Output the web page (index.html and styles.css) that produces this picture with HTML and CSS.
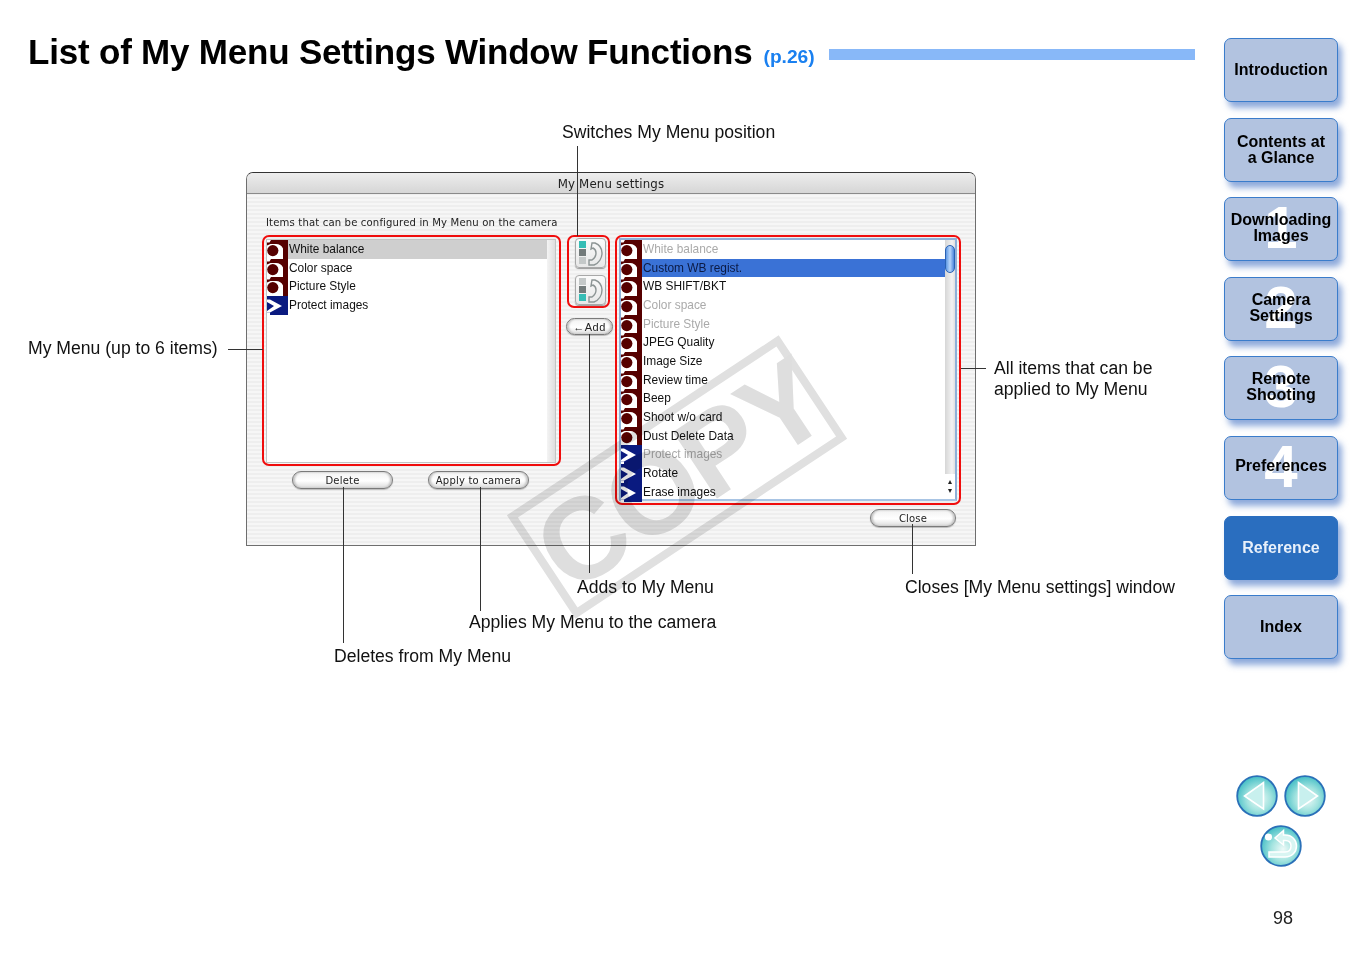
FILE: index.html
```html
<!DOCTYPE html>
<html lang="en">
<head>
<meta charset="utf-8">
<title>List of My Menu Settings Window Functions</title>
<link rel="stylesheet" href="styles.css">
</head>
<body>
<svg class="defs" width="0" height="0" aria-hidden="true">
  <symbol id="ic-cam" viewBox="0 0 21 19">
    <rect width="21" height="19" fill="#fff"/>
    <path d="M4 0H21V19H16V8.5Q14 4 9 4H3.5L0 5.5V2.5H2.5Z" fill="#560000"/>
    <circle cx="5.8" cy="10.6" r="5.6" fill="#560000"/>
  </symbol>
  <symbol id="ic-play" viewBox="0 0 21 19">
    <rect width="21" height="19" fill="#0a1a80"/>
    <path d="M0 3.5H3L15 10 3 16.5H0V15L7 10 0 6Z" fill="#fff"/>
    <path d="M0 16.5H3V19H0Z" fill="#fff"/>
  </symbol>
  <symbol id="ic-order" viewBox="0 0 26 28">
    <rect x="1" y="2" width="7" height="7" fill="#35bdb5"/>
    <rect x="1" y="10" width="7" height="7" fill="#727a7a"/>
    <rect x="1" y="18" width="7" height="7" fill="#c4c8c8"/>
    <path d="M14 4H17C22 6 24 10 24 14C24 19 21 24 16 26H11V21H14C17 19 18 17 18 14C18 12 17 10 15 9L13 10Z" fill="none" stroke="#8c9494" stroke-width="1.4"/>
  </symbol>
  <symbol id="ic-order2" viewBox="0 0 26 28">
    <rect x="1" y="2" width="7" height="7" fill="#c4c8c8"/>
    <rect x="1" y="10" width="7" height="7" fill="#727a7a"/>
    <rect x="1" y="18" width="7" height="7" fill="#35bdb5"/>
    <path d="M14 4H17C22 6 24 10 24 14C24 19 21 24 16 26H11V21H14C17 19 18 17 18 14C18 12 17 10 15 9L13 10Z" fill="none" stroke="#8c9494" stroke-width="1.4"/>
  </symbol>
  <radialGradient id="disc" cx="55%" cy="58%" r="60%">
    <stop offset="0" stop-color="#eefaf8"/>
    <stop offset=".5" stop-color="#a2e3df"/>
    <stop offset="1" stop-color="#3fbcc4"/>
  </radialGradient>
</svg>

<div class="page">
  <main class="content">
    <header class="heading">
      <h1 class="title">List of My Menu Settings Window Functions</h1>
      <a class="pageref">(p.26)</a>
      <span class="rule"></span>
    </header>

    <section class="diagram">
      <div class="dialog">
        <div class="titlebar">My Menu settings</div>
        <div class="dialog-body">
          <div class="caption">Items that can be configured in My Menu on the camera</div>
          <div class="panes">
            <div class="pane-left">
              <div class="redbox list-left">
                <div class="listbox">
                  <div class="rows">
                    <div class="row picked"><svg class="ic"><use href="#ic-cam"/></svg><span>White balance</span></div>
                    <div class="row"><svg class="ic"><use href="#ic-cam"/></svg><span>Color space</span></div>
                    <div class="row"><svg class="ic"><use href="#ic-cam"/></svg><span>Picture Style</span></div>
                    <div class="row"><svg class="ic"><use href="#ic-play"/></svg><span>Protect images</span></div>
                  </div>
                  <div class="track"></div>
                </div>
              </div>
              <div class="left-actions">
                <button class="pill wide">Delete</button>
                <button class="pill wide">Apply to camera</button>
              </div>
            </div>

            <div class="pane-mid">
              <div class="redbox order">
                <div class="orderbtn"><svg class="ic-o"><use href="#ic-order"/></svg></div>
                <div class="orderbtn"><svg class="ic-o"><use href="#ic-order2"/></svg></div>
              </div>
              <button class="pill add">←Add</button>
            </div>

            <div class="pane-right">
              <div class="redbox list-right">
                <div class="listbox focus">
                  <div class="rows">
                    <div class="row off"><svg class="ic"><use href="#ic-cam"/></svg><span>White balance</span></div>
                    <div class="row sel"><svg class="ic"><use href="#ic-cam"/></svg><span>Custom WB regist.</span></div>
                    <div class="row"><svg class="ic"><use href="#ic-cam"/></svg><span>WB SHIFT/BKT</span></div>
                    <div class="row off"><svg class="ic"><use href="#ic-cam"/></svg><span>Color space</span></div>
                    <div class="row off"><svg class="ic"><use href="#ic-cam"/></svg><span>Picture Style</span></div>
                    <div class="row"><svg class="ic"><use href="#ic-cam"/></svg><span>JPEG Quality</span></div>
                    <div class="row"><svg class="ic"><use href="#ic-cam"/></svg><span>Image Size</span></div>
                    <div class="row"><svg class="ic"><use href="#ic-cam"/></svg><span>Review time</span></div>
                    <div class="row"><svg class="ic"><use href="#ic-cam"/></svg><span>Beep</span></div>
                    <div class="row"><svg class="ic"><use href="#ic-cam"/></svg><span>Shoot w/o card</span></div>
                    <div class="row"><svg class="ic"><use href="#ic-cam"/></svg><span>Dust Delete Data</span></div>
                    <div class="row off"><svg class="ic"><use href="#ic-play"/></svg><span>Protect images</span></div>
                    <div class="row"><svg class="ic"><use href="#ic-play"/></svg><span>Rotate</span></div>
                    <div class="row"><svg class="ic"><use href="#ic-play"/></svg><span>Erase images</span></div>
                  </div>
                  <div class="track scroll">
                    <div class="thumb"></div>
                    <div class="arrows"><span class="up"></span><span class="down"></span></div>
                  </div>
                </div>
              </div>
              <button class="pill close">Close</button>
            </div>
          </div>
        </div>
      </div>

      <i class="line v l-switch"></i>
      <i class="line h l-mymenu"></i>
      <i class="line h l-all"></i>
      <i class="line v l-add"></i>
      <i class="line v l-close"></i>
      <i class="line v l-delete"></i>
      <i class="line v l-apply"></i>

      <p class="note n-switch">Switches My Menu position</p>
      <p class="note n-mymenu">My Menu (up to 6 items)</p>
      <p class="note n-all">All items that can be<br>applied to My Menu</p>
      <p class="note n-add">Adds to My Menu</p>
      <p class="note n-close">Closes [My Menu settings] window</p>
      <p class="note n-apply">Applies My Menu to the camera</p>
      <p class="note n-delete">Deletes from My Menu</p>

      <div class="stamp"><span>COPY</span></div>
    </section>
  </main>

  <aside class="side">
    <nav class="nav">
      <a class="tab">Introduction</a>
      <a class="tab">Contents at<br>a Glance</a>
      <a class="tab"><b class="num">1</b><span>Downloading<br>Images</span></a>
      <a class="tab"><b class="num">2</b><span>Camera<br>Settings</span></a>
      <a class="tab"><b class="num">3</b><span>Remote<br>Shooting</span></a>
      <a class="tab"><b class="num">4</b><span class="solo">Preferences</span></a>
      <a class="tab now">Reference</a>
      <a class="tab">Index</a>
    </nav>
    <div class="pager">
      <div class="pager-row">
        <svg class="disc" viewBox="0 0 42 42"><circle cx="21" cy="21" r="19.8" fill="url(#disc)" stroke="#2a70b8" stroke-width="1.8"/><path d="M27.5 7.5V34L8.5 21Z" fill="#c8f0ee" stroke="#fff" stroke-width="1.6"/></svg>
        <svg class="disc" viewBox="0 0 42 42"><circle cx="21" cy="21" r="19.8" fill="url(#disc)" stroke="#2a70b8" stroke-width="1.8"/><path d="M14.5 7.5V34L33.5 21Z" fill="#c8f0ee" stroke="#fff" stroke-width="1.6"/></svg>
      </div>
      <svg class="disc" viewBox="0 0 42 42"><circle cx="21" cy="21" r="19.8" fill="url(#disc)" stroke="#2a70b8" stroke-width="1.8"/><circle cx="8.5" cy="12" r="3.6" fill="#fff"/><path d="M23.5 5.5L15 13L23.5 20V15.5H25C29 15.5 31 18 31 21C31 24.5 29 27 25 27H9V32H25C32 32 36.5 27 36.5 21C36.5 15 32 10 25 10H23.5Z" fill="#d8f5f2" stroke="#fff" stroke-width="1.5"/></svg>
    </div>
    <div class="pagenum">98</div>
  </aside>
</div>
</body>
</html>
```
FILE: styles.css
```css
* { box-sizing: border-box; }
html, body { margin: 0; padding: 0; background: #fff; }
body { font-family: "Liberation Sans", Arial, sans-serif; color: #000; overflow: hidden; }
.defs { position: absolute; }
.page { display: flex; width: 1350px; height: 954px; }

/* main column */
.content { width: 1224px; flex: none; padding-left: 28px; }
.heading { display: flex; align-items: flex-start; height: 102px; padding-top: 31px; width: 1167px; }
.title { margin: 0; font-size: 35px; line-height: 42px; font-weight: 700; white-space: nowrap; letter-spacing: -.2px; }
.pageref { color: #1a80f0; font-size: 19.2px; font-weight: 700; line-height: 24px; margin: 14px 0 0 11px; white-space: nowrap; }
.rule { flex: 1; height: 11px; background: #88b8f8; margin: 18px 0 0 14px; }

/* free canvas holding the window and its callouts */
.diagram { position: relative; margin-left: -28px; height: 852px; }
.dialog { position: absolute; left: 246px; top: 70px; width: 730px; height: 374px; border: 1px solid #6e6e6e; border-top-color: #333; border-radius: 7px 7px 0 0; background: repeating-linear-gradient(#eeeeee 0 2px, #f6f6f6 2px 4px); }
.titlebar { height: 21px; text-align: center; font: 11.8px/23px "DejaVu Sans", sans-serif; letter-spacing: .15px; color: #222; background: linear-gradient(#ededed, #d6d6d6); border-bottom: 1px solid #8a8a8a; border-radius: 6px 6px 0 0; }
.dialog-body { padding: 22px 15px 0; }
.caption { font: 10.1px/14px "DejaVu Sans", sans-serif; letter-spacing: .14px; color: #222; padding-left: 4px; height: 19px; }
.panes { display: flex; align-items: flex-start; }
.pane-left { width: 299px; flex: none; }
.pane-mid { width: 48px; flex: none; margin: 0 1px 0 5px; display: flex; flex-direction: column; align-items: flex-start; }
.pane-right { width: 346px; flex: none; display: flex; flex-direction: column; }

.redbox { border: 2px solid #f00d0d; border-radius: 7px; }
.list-left { height: 231px; padding: 2px 3px 1px 2px; }
.list-right { height: 270px; padding: 1px 2px 2px; }
.listbox { display: flex; height: 100%; background: #fff; border: 1px solid #c4c4c4; }
.listbox.focus { border: 2px solid #8fb0d8; border-bottom-color: #a8c4e4; }
.rows { flex: 1; min-width: 0; }
.row { display: flex; align-items: center; height: 18.68px; font-size: 11.9px; line-height: 18px; color: #111; white-space: nowrap; }
.row > span { flex: 1; height: 100%; padding-left: 1px; }
.ic { width: 21px; height: 19px; flex: none; }
.row.picked > span { background: #cfcfcf; }
.row.off { color: #aaaaaa; }
.row.sel > span { background: #3a72d6; color: #0b1a44; }

.track { width: 8px; flex: none; background: linear-gradient(90deg, #f4f4f4, #dedede); }
.track.scroll { width: 10px; position: relative; background: linear-gradient(90deg, #d6d6d6, #f2f2f2 70%, #e0e0e0); }
.thumb { position: absolute; left: 0; top: 5px; width: 10px; height: 28px; border-radius: 5px; border: 1px solid #2a62b4; background: linear-gradient(90deg, #5f98e4, #b8d6fa 50%, #4b86dc); }
.arrows { position: absolute; left: 0; bottom: 0; width: 10px; height: 25px; background: #fff; display: flex; flex-direction: column; align-items: center; justify-content: space-around; padding: 3px 0; }
.arrows span { width: 0; height: 0; border-left: 2.5px solid transparent; border-right: 2.5px solid transparent; }
.arrows .up { border-bottom: 4px solid #222; }
.arrows .down { border-top: 4px solid #222; }

.pill { display: block; padding: 0; height: 18px; border: 1px solid #7a7a7a; border-radius: 9px; color: #222; font: 10px/15px "DejaVu Sans", sans-serif; letter-spacing: .2px; background: linear-gradient(#f2f2f2 0, #ffffff 55%, #dcdcdc 100%); box-shadow: inset 2px 0 2px #c6c6c6, inset -2px 0 2px #c6c6c6, 0 1px 1px #bbb; }
.left-actions { display: flex; padding: 5px 0 0 30px; gap: 35px; }
.wide { width: 101px; }
.order { width: 43px; height: 73px; padding: 1px 0 0 6px; display: flex; flex-direction: column; gap: 7px; margin-left: 1px; }
.orderbtn { width: 31px; height: 30px; border: 1px solid #a8a8a8; border-radius: 4px; background: linear-gradient(#fafafa, #e8e8e8); box-shadow: 0 1px 1px #999; display: flex; align-items: center; justify-content: center; }
.ic-o { width: 26px; height: 28px; }
.add { width: 47px; margin-top: 10px; height: 17px; font: 11px/14px "Liberation Sans", sans-serif; letter-spacing: .5px; }
.close { width: 86px; margin: 4px 0 0 255px; }

/* callouts */
.line { position: absolute; display: block; background: #333; }
.line.v { width: 1px; }
.line.h { height: 1px; }
.l-switch { left: 577px; top: 44px; height: 90px; }
.l-mymenu { left: 228px; top: 247px; width: 35px; }
.l-all { left: 961px; top: 266px; width: 25px; }
.l-add { left: 589px; top: 232px; height: 239px; }
.l-close { left: 912px; top: 422px; height: 50px; }
.l-delete { left: 343px; top: 385px; height: 156px; }
.l-apply { left: 480px; top: 385px; height: 124px; }

.note { position: absolute; margin: 0; font-size: 17.6px; line-height: 21px; white-space: nowrap; color: #111; }
.n-switch { left: 562px; top: 20px; }
.n-mymenu { left: 28px; top: 236px; }
.n-all { left: 994px; top: 256px; }
.n-add { left: 577px; top: 475px; }
.n-close { left: 905px; top: 475px; }
.n-apply { left: 469px; top: 510px; }
.n-delete { left: 334px; top: 544px; }

.stamp { position: absolute; left: 514px; top: 313px; width: 326px; height: 124px; border: 8px solid #e0e0e0; transform: rotate(-33.5deg); mix-blend-mode: multiply; display: flex; align-items: center; justify-content: center; padding-left: 8px; pointer-events: none; }
.stamp span { font-size: 116px; line-height: 100px; font-weight: 700; color: #dedede; letter-spacing: -3px; white-space: nowrap; }

/* side column */
.side { width: 126px; flex: none; position: relative; padding-top: 38px; }
.nav { display: flex; flex-direction: column; gap: 15.6px; }
.tab { position: relative; display: flex; align-items: center; justify-content: center; width: 114px; height: 64px; text-align: center; font-size: 16px; line-height: 16px; font-weight: 700; color: #000; background: #b2c3e0; border: 1.5px solid #3a7ccb; border-radius: 7px; box-shadow: 4px 6px 6px rgba(50, 100, 190, .55); }
.tab > span { position: relative; top: -1px; }
.tab > .solo { top: -2px; }
.tab.now { background: #2a6ebf; color: #e8f0fa; border-color: #2a6ebf; }
.num { position: absolute; left: 0; right: 0; top: 0; text-align: center; font-size: 60px; line-height: 60px; color: #fff; font-weight: 700; }
.pager { position: absolute; left: 12px; top: 775px; width: 90px; display: flex; flex-direction: column; align-items: center; gap: 8px; }
.pager-row { display: flex; gap: 6px; }
.disc { width: 42px; height: 42px; display: block; }
.pagenum { position: absolute; left: 49px; top: 907px; font-size: 18px; line-height: 22px; color: #222; }
```
